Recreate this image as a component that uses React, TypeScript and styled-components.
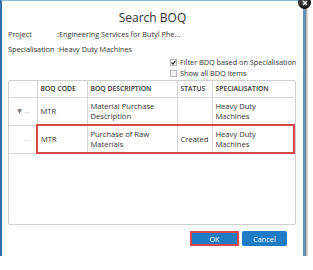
import React from "react";
import styled, { createGlobalStyle } from "styled-components";

const Global = createGlobalStyle`
  html, body {
    margin: 0;
    padding: 0;
    background: #ffffff;
  }
  body {
    font-family: "Open Sans", "DejaVu Sans", sans-serif;
    color: #333333;
  }
`;

const Dialog = styled.div`
  position: relative;
  box-sizing: border-box;
  width: 306px;
  height: 256px;
  background: #ffffff;
  border-left: 2px solid #2f6ea6;
  border-top: 1px solid #8dbad9;
  border-right: 3px solid #6390b4;
  box-shadow: 1px 4px 2px rgba(60, 60, 60, 0.55);
  display: flex;
  flex-direction: column;
`;

const CloseBtn = styled.div`
  position: absolute;
  top: -5px;
  right: -8px;
  width: 13px;
  height: 13px;
  border-radius: 50%;
  background: radial-gradient(circle at 40% 35%, #555 0%, #111 70%);
  display: flex;
  align-items: center;
  justify-content: center;
`;

const Title = styled.div`
  text-align: center;
  font-size: 12px;
  line-height: 16px;
  padding-top: 9px;
  color: #333;
`;

const InfoRow = styled.div<{ $top: number }>`
  display: flex;
  font-size: 7.3px;
  line-height: 10px;
  padding-left: 6px;
  margin-top: ${(p) => p.$top}px;
`;

const Label = styled.span`
  width: 49px;
  flex-shrink: 0;
`;

const Options = styled.div`
  display: flex;
  flex-direction: column;
  padding-left: 168px;
  margin-top: 3px;
  gap: 1px;
`;

const OptionRow = styled.label`
  display: flex;
  align-items: center;
  gap: 3px;
  font-size: 7.3px;
  line-height: 10px;
`;

const Box = styled.span`
  box-sizing: border-box;
  width: 7px;
  height: 7px;
  border: 1px solid #b5b5b5;
  background: #f1f1f1;
  display: flex;
  align-items: center;
  justify-content: center;
`;

const TableWrap = styled.div`
  box-sizing: border-box;
  margin: 2px 7px 0 6px;
  height: 145px;
  border: 1px solid #cfcfcf;
  border-radius: 2px;
  overflow: hidden;
`;

const Grid = styled.table`
  width: 100%;
  border-collapse: collapse;
  table-layout: fixed;
  font-size: 7.6px;
  line-height: 10px;
`;

const Th = styled.th`
  text-align: left;
  font-weight: 600;
  font-size: 6.8px;
  height: 16px;
  padding: 0 3px;
  border-left: 1px solid #d6d6d6;
  border-bottom: 1px solid #d6d6d6;
  white-space: nowrap;
  &:first-child {
    border-left: none;
  }
`;

const Td = styled.td<{ $sel?: "l" | "m" | "r" }>`
  height: 26px;
  padding: 0 3px;
  vertical-align: middle;
  border-left: 1px solid #d6d6d6;
  border-bottom: 1px solid #d6d6d6;
  &:first-child {
    border-left: none;
  }
  ${(p) =>
    p.$sel
      ? `border-top: 2px solid #d8474a; border-bottom: 2px solid #d8474a;`
      : ""}
  ${(p) => (p.$sel === "l" ? `border-left: 2px solid #d8474a;` : "")}
  ${(p) => (p.$sel === "r" ? `border-right: 2px solid #d8474a;` : "")}
`;

const Wrapped = styled.span<{ $max: number }>`
  display: block;
  max-width: ${(p) => p.$max}px;
`;

const Expander = styled.span`
  display: flex;
  align-items: center;
  justify-content: flex-end;
  gap: 3px;
  padding-right: 4px;
  color: #777;
  font-size: 6px;
`;

const Footer = styled.div`
  display: flex;
  justify-content: flex-end;
  gap: 3px;
  padding: 6px 16px 0 0;
`;

const Button = styled.button<{ $focus?: boolean }>`
  box-sizing: border-box;
  width: ${(p) => (p.$focus ? 49 : 45)}px;
  height: 15px;
  padding: 0;
  background: #1f7cc4;
  color: #ffffff;
  font-family: inherit;
  font-size: 7.3px;
  border: ${(p) => (p.$focus ? "2px solid #d8474a" : "none")};
  border-radius: ${(p) => (p.$focus ? 0 : 2)}px;
`;

const rows = [
  {
    arrow: true,
    code: "MTR",
    desc: "Material Purchase Description",
    status: "",
    spec: "Heavy Duty Machines",
    sel: false,
  },
  {
    arrow: false,
    code: "MTR",
    desc: "Purchase of Raw Materials",
    status: "Created",
    spec: "Heavy Duty Machines",
    sel: true,
  },
];

export default function App() {
  return (
    <>
      <Global />
      <Dialog>
        <CloseBtn>
          <svg width="6" height="6" viewBox="0 0 6 6">
            <path d="M1 1L5 5M5 1L1 5" stroke="#fff" strokeWidth="1.4" />
          </svg>
        </CloseBtn>
        <Title>Search BOQ</Title>
        <InfoRow $top={3}>
          <Label>Project</Label>
          <span>:Engineering Services for Butyl Phe...</span>
        </InfoRow>
        <InfoRow $top={5}>
          <Label>Specialisation</Label>
          <span>:Heavy Duty Machines</span>
        </InfoRow>
        <Options>
          <OptionRow>
            <Box>
              <svg width="5" height="5" viewBox="0 0 5 5">
                <path d="M0.6 2.6L2 4L4.5 0.8" fill="none" stroke="#333" strokeWidth="1.2" />
              </svg>
            </Box>
            Filter BDQ based on Specialisation
          </OptionRow>
          <OptionRow>
            <Box />
            Show all BDQ items
          </OptionRow>
        </Options>
        <TableWrap>
          <Grid>
            <colgroup>
              <col style={{ width: 28 }} />
              <col style={{ width: 50 }} />
              <col style={{ width: 90 }} />
              <col style={{ width: 35 }} />
              <col />
            </colgroup>
            <thead>
              <tr>
                <Th />
                <Th>BOQ CODE</Th>
                <Th>BOQ DESCRIPTION</Th>
                <Th>STATUS</Th>
                <Th>SPECIALISATION</Th>
              </tr>
            </thead>
            <tbody>
              {rows.map((r, i) => (
                <tr key={i}>
                  <Td>
                    <Expander>
                      {r.arrow ? <span>▼</span> : null}
                      <span>...</span>
                    </Expander>
                  </Td>
                  <Td $sel={r.sel ? "l" : undefined}>{r.code}</Td>
                  <Td $sel={r.sel ? "m" : undefined}>
                    <Wrapped $max={74}>{r.desc}</Wrapped>
                  </Td>
                  <Td $sel={r.sel ? "m" : undefined}>{r.status}</Td>
                  <Td $sel={r.sel ? "r" : undefined}>
                    <Wrapped $max={58}>{r.spec}</Wrapped>
                  </Td>
                </tr>
              ))}
            </tbody>
          </Grid>
        </TableWrap>
        <Footer>
          <Button $focus>OK</Button>
          <Button>Cancel</Button>
        </Footer>
      </Dialog>
    </>
  );
}
